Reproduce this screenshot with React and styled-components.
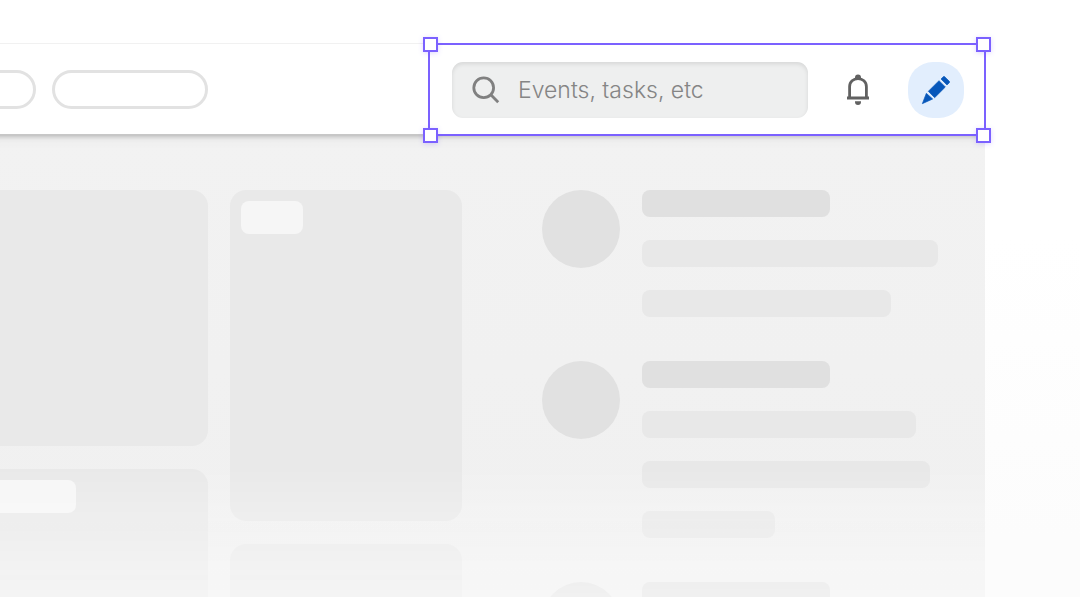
import React from "react";
import styled, { createGlobalStyle } from "styled-components";

const GlobalStyle = createGlobalStyle`
  *, *::before, *::after { box-sizing: border-box; }
  body {
    margin: 0;
    font-family: Inter, "Liberation Sans", sans-serif;
    background: #ffffff;
  }
`;

const Page = styled.div`
  display: flex;
  flex-direction: column;
  height: 100vh;
  overflow: hidden;
  padding: 44px 95px 0 0;
  background: linear-gradient(#ffffff 40%, #fcfcfc 90%);
`;

const Header = styled.header`
  flex: none;
  display: flex;
  align-items: flex-start;
  height: 90px;
  margin-left: -20px;
  padding-left: 20px;
  background: #ffffff;
  box-shadow: 0 0 1px #f4f4f4, 0 2px 5px rgba(0, 0, 0, 0.26), 0 4px 14px rgba(0, 0, 0, 0.05);
  clip-path: inset(-1px 0 -20px 0);
`;

const HeaderArea = styled.div`
  position: relative;
  z-index: 1;
  flex: none;
  display: flex;
  flex-direction: column;
`;

const Tabs = styled.nav`
  display: flex;
  gap: 16px;
  padding-top: 26px;
  margin-left: -120px;
`;

const Tab = styled.button`
  width: 156px;
  height: 39px;
  padding: 0;
  border: 3px solid #e2e2e2;
  border-radius: 20px;
  background: transparent;
`;

const Selection = styled.div`
  position: absolute;
  z-index: 2;
  top: 0;
  right: 0;
  display: flex;
  align-items: center;
  gap: 22px;
  width: 556px;
  padding: 18px 21px 17px 23px;
  outline: 2px solid #7b61ff;
  outline-offset: -1px;
`;

const Handle = styled.span`
  position: absolute;
  ${(p) => p.$y}: ${(p) => (p.$y === "top" ? -7 : -8)}px;
  ${(p) => p.$x}: -6px;
  width: 15px;
  height: 15px;
  border: 2px solid #7b61ff;
  background: #ffffff;
  box-shadow: 0 1px 5px rgba(123, 97, 255, 0.25);
`;

const Search = styled.label`
  flex: 1;
  min-width: 0;
  display: flex;
  align-items: center;
  gap: 18px;
  height: 56px;
  padding: 0 20px;
  border-radius: 11px;
  background: #eeefef;
  box-shadow: inset 0 2px 4px rgba(0, 0, 0, 0.1);
`;

const SearchInput = styled.input`
  flex: 1;
  min-width: 0;
  padding: 0;
  border: 0;
  outline: 0;
  background: transparent;
  font-family: inherit;
  font-size: 23px;
  line-height: 28px;
  font-weight: 300;
  color: #808080;
  &::placeholder { color: #858585; opacity: 1; }
`;

const IconButton = styled.button`
  flex: none;
  display: flex;
  align-items: center;
  justify-content: center;
  width: 56px;
  height: 56px;
  padding: 0;
  border: 0;
  border-radius: 25px;
  background: ${(p) => (p.$filled ? "#e2eefd" : "transparent")};
`;

const Icon = styled.svg`
  flex: none;
  display: block;
`;

const Content = styled.main`
  flex: 1;
  min-height: 0;
  overflow: hidden;
  display: flex;
  align-items: flex-start;
  padding-top: 56px;
  background: linear-gradient(#f2f2f2, #f0f0f0);
  mask-image: linear-gradient(#000 72%, rgba(0, 0, 0, 0.4) 100%);
`;

const Column = styled.section`
  flex: none;
  display: flex;
  flex-direction: column;
  gap: 23px;
  width: ${(p) => p.$width}px;
  margin-right: ${(p) => p.$after}px;
  margin-left: ${(p) => p.$before || 0}px;
`;

const Card = styled.div`
  height: ${(p) => p.$height}px;
  padding: 11px;
  border-radius: 16px;
  background: #e9e9e9;
`;

const Label = styled.div`
  width: ${(p) => p.$width}px;
  height: 33px;
  border-radius: 8px;
  background: #f6f6f6;
`;

const Feed = styled.ul`
  flex: 1;
  min-width: 0;
  display: flex;
  flex-direction: column;
  gap: 44px;
  margin: 0;
  padding: 0;
  list-style: none;
`;

const FeedItem = styled.li`
  display: flex;
  align-items: flex-start;
  gap: 22px;
`;

const Avatar = styled.div`
  flex: none;
  width: 78px;
  height: 78px;
  border-radius: 50%;
  background: #e1e1e1;
`;

const Lines = styled.div`
  display: flex;
  flex-direction: column;
  gap: 23px;
`;

const Line = styled.div`
  width: ${(p) => p.$width}px;
  height: 27px;
  border-radius: 8px;
  background: ${(p) => (p.$title ? "#e0e0e0" : "#e8e8e8")};
`;

const SearchIcon = () => (
  <Icon width="28" height="28" viewBox="0 0 28 28" fill="none" stroke="#808080" strokeWidth="2.8" aria-hidden="true">
    <circle cx="11.7" cy="11.7" r="9.9" />
    <path d="M18.6 18.6 26.2 26.2" />
  </Icon>
);

const BellIcon = () => (
  <Icon width="24" height="32" viewBox="0 0 24 32" aria-hidden="true">
    <path
      d="M3.6 23.5V12.7C3.6 7.6 7.4 4.6 12 4.6S20.4 7.6 20.4 12.7V23.5"
      fill="none"
      stroke="#616161"
      strokeWidth="2.8"
    />
    <path d="M9 4.5V3.4a3 3 0 0 1 6 0V4.5ZM1 22.6H23V25.5H1ZM9 27.2H15V28a3 3 0 0 1-6 0Z" fill="#616161" />
  </Icon>
);

const PencilIcon = () => (
  <Icon width="30" height="30" viewBox="62 60 90 90" fill="#0757ba" stroke="#0757ba" strokeWidth="2" strokeLinejoin="round" aria-hidden="true">
    <path d="M122 72 129 65Q131 63 133 65L147 79Q149 81 147 83L140 90Z" />
    <path d="M84 109 116 77 135 96 103 128Z" />
    <path d="M66 146 78 115 97 132Z" />
  </Icon>
);

const feed = [
  [188, 296, 249],
  [188, 274, 288, 133],
  [188, 296],
];

export default function App() {
  return (
    <Page>
      <GlobalStyle />
      <HeaderArea>
        <Header>
          <Tabs aria-label="Views">
            <Tab aria-label="View one" />
            <Tab aria-label="View two" />
          </Tabs>
        </Header>
        <Selection>
          <Search>
            <SearchIcon />
            <SearchInput type="text" aria-label="Search" placeholder="Events, tasks, etc" />
          </Search>
          <IconButton aria-label="Notifications">
            <BellIcon />
          </IconButton>
          <IconButton $filled aria-label="Compose">
            <PencilIcon />
          </IconButton>
          <Handle $x="left" $y="top" />
          <Handle $x="right" $y="top" />
          <Handle $x="left" $y="bottom" />
          <Handle $x="right" $y="bottom" />
        </Selection>
      </HeaderArea>
      <Content>
        <Column $width={328} $before={-120} $after={22}>
          <Card $height={256} />
          <Card $height={256}>
            <Label $width={185} />
          </Card>
        </Column>
        <Column $width={232} $after={80}>
          <Card $height={331}>
            <Label $width={62} />
          </Card>
          <Card $height={256} />
        </Column>
        <Feed>
          {feed.map((widths, i) => (
            <FeedItem key={i}>
              <Avatar />
              <Lines>
                {widths.map((width, j) => (
                  <Line key={j} $width={width} $title={j === 0} />
                ))}
              </Lines>
            </FeedItem>
          ))}
        </Feed>
      </Content>
    </Page>
  );
}
